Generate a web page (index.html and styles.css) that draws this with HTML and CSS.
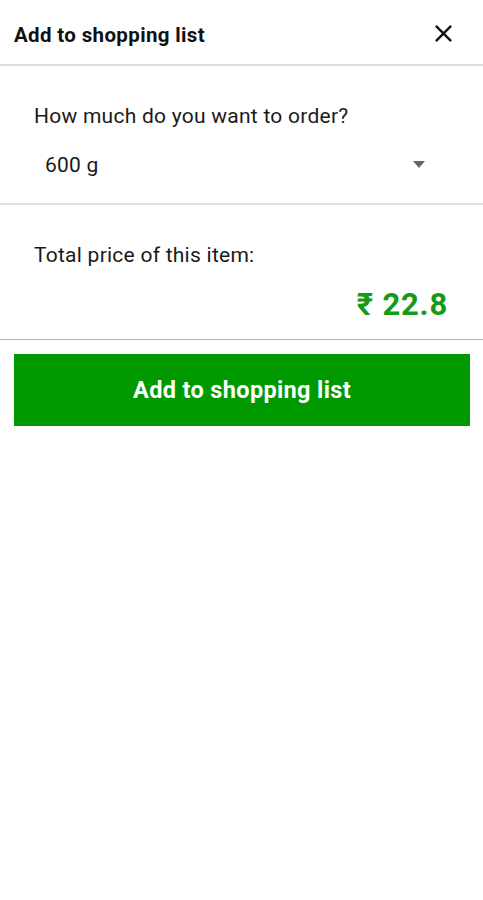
FILE: index.html
```html
<!DOCTYPE html>
<html>
<head>
<meta charset="utf-8">
<link rel="stylesheet" href="styles.css">
</head>
<body>
<div class="sheet">
  <header class="header">
    <div class="title">Add to shopping list</div>
    <svg class="close" viewBox="0 0 24 24" width="29" height="29"><path d="M19 6.41L17.59 5 12 10.59 6.41 5 5 6.41 10.59 12 5 17.59 6.41 19 12 13.41 17.59 19 19 17.59 13.41 12z" fill="#111"/></svg>
  </header>
  <section class="qty">
    <div class="label">How much do you want to order?</div>
    <div class="select">
      <span class="value">600 g</span>
      <span class="arrow"></span>
    </div>
  </section>
  <section class="price">
    <div class="label">Total price of this item:</div>
    <div class="amount">₹ 22.8</div>
  </section>
  <div class="actions">
    <button class="add">Add to shopping list</button>
  </div>
</div>
</body>
</html>
```
FILE: styles.css
```css
html, body {
  margin: 0;
  padding: 0;
  background: #fff;
}
body {
  font-family: Roboto, "Noto Sans", sans-serif;
  color: #1a1a1a;
}
.header {
  box-sizing: border-box;
  height: 66px;
  padding: 6px 25px 0 14px;
  border-bottom: 2px solid #dedede;
  display: flex;
  align-items: center;
  justify-content: space-between;
}
.title {
  font-size: 20.5px;
  letter-spacing: 0.35px;
  font-weight: 700;
  line-height: 24px;
  color: #111;
}
.close {
  display: block;
  margin-top: -4px;
}
.label {
  font-size: 21px;
  letter-spacing: 0.25px;
  line-height: 24px;
  color: #1a1a1a;
}
.qty {
  padding: 38px 58px 26px 34px;
  border-bottom: 2px solid #dedede;
}
.select {
  margin-top: 25px;
  display: flex;
  align-items: center;
  justify-content: space-between;
  padding-left: 11px;
}
.value {
  font-size: 21px;
  letter-spacing: 0.25px;
  line-height: 24px;
}
.arrow {
  width: 0;
  height: 0;
  border-left: 6.5px solid transparent;
  border-right: 6.5px solid transparent;
  border-top: 7px solid #666;
  margin-top: -1px;
}
.price {
  padding: 38px 35px 16px 34px;
  border-bottom: 1.5px solid #b5b5b5;
}
.amount {
  margin-top: 20px;
  text-align: right;
  font-size: 31px;
  letter-spacing: 0.8px;
  font-weight: 700;
  line-height: 36px;
  color: #159a15;
}
.actions {
  padding: 14px 13px 0 14px;
}
.add {
  display: block;
  width: 100%;
  height: 72px;
  border: none;
  background: #009a00;
  color: #fff;
  font-family: Roboto, "Noto Sans", sans-serif;
  font-size: 23.5px;
  letter-spacing: 0.35px;
  font-weight: 700;
  padding: 0;
}
```
